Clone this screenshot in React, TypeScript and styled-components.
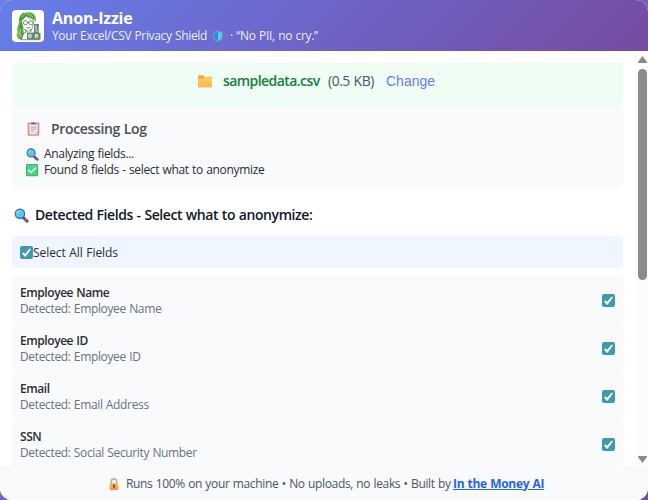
import React, { useState } from "react";
import styled, { createGlobalStyle } from "styled-components";

const GlobalStyle = createGlobalStyle`
  * { box-sizing: border-box; }
  body {
    margin: 0;
    height: 500px;
    overflow: hidden;
    background: linear-gradient(135deg, #667eea 0%, #764ba2 100%);
    font-family: "Open Sans", "Noto Sans", sans-serif;
    font-size: 12px;
    line-height: 16px;
    word-spacing: 0.5px;
    color: #2b2d33;
  }
`;

const Shell = styled.div`
  display: flex;
  flex-direction: column;
  height: 500px;
  overflow: hidden;
  border-radius: 12px;
  background: #fff;
  white-space: nowrap;
`;

const Header = styled.header`
  display: flex;
  align-items: center;
  gap: 8px;
  flex: none;
  height: 51px;
  padding: 1px 12px 0;
  background: linear-gradient(135deg, #667eea 0%, #764ba2 100%);
  color: #fff;
`;

const Logo = styled.div`
  display: flex;
  width: 32px;
  height: 32px;
  border-radius: 4px;
  background: #fff;
`;

const Brand = styled.h1`
  margin: 0;
  font-size: 16px;
  font-weight: 700;
  line-height: 18px;
  letter-spacing: -0.19px;
`;

const Tagline = styled.div`
  display: flex;
  align-items: center;
  height: 16px;
  margin-top: 1px;
  color: rgba(255, 255, 255, 0.9);
  letter-spacing: -0.34px;
`;

const Quote = styled.span`
  margin-left: 6px;
  letter-spacing: -0.3px;
`;

const Icon = styled.svg<{ $size: number; $before?: number; $after?: number; $lift?: number }>`
  flex: none;
  display: block;
  width: ${(p) => p.$size}px;
  height: ${(p) => p.$size}px;
  margin-left: ${(p) => p.$before ?? 0}px;
  margin-right: ${(p) => p.$after ?? 0}px;
  margin-bottom: ${(p) => p.$lift ?? 0}px;
`;

const Body = styled.div`
  display: flex;
  flex: none;
  height: 415px;
`;

const Content = styled.main`
  flex: 1;
  padding: 12px 12px 0;
  overflow: hidden;
`;

const FileBar = styled.div`
  display: flex;
  align-items: center;
  justify-content: flex-start;
  height: 43px;
  padding: 0 0 7px 186px;
  border-radius: 4px;
  background: #f0fdf4;
  font-size: 14px;
`;

const FileName = styled.span`
  width: 97px;
  margin-right: 8px;
  color: #15803d;
  font-weight: 600;
  letter-spacing: -0.57px;
`;

const FileSize = styled.span`
  width: 46px;
  margin-right: 12px;
  color: #4b5563;
  letter-spacing: -0.48px;
`;

const ChangeButton = styled.button`
  padding: 0;
  border: 0;
  background: none;
  color: #667eea;
  font: 14px/16px "Liberation Sans", Arial, sans-serif;
`;

const LogPanel = styled.section`
  height: 83px;
  padding: 14px 14px 0;
  border-radius: 6px;
  background: #f8fafc;
`;

const LogTitle = styled.h2`
  display: flex;
  align-items: center;
  height: 17px;
  margin: 0 0 9px;
  color: #495057;
  font-size: 14px;
  font-weight: 600;
  letter-spacing: -0.35px;
`;

const LogLine = styled.div`
  display: flex;
  align-items: center;
  height: 16px;
  letter-spacing: -0.33px;
`;

const SectionTitle = styled.h2`
  display: flex;
  align-items: center;
  height: 20px;
  margin: 16px 0 11px;
  padding-left: 2px;
  color: #111827;
  font-size: 14px;
  font-weight: 600;
  letter-spacing: -0.42px;
`;

const SelectAll = styled.div`
  display: flex;
  align-items: center;
  height: 32px;
  margin-bottom: 8px;
  padding: 0 8px;
  border-radius: 4px;
  background: #eff6ff;
  font-weight: 500;
  letter-spacing: -0.06px;
`;

const SelectAllLabel = styled.span`
  padding-top: 2px;
`;

const FieldRow = styled.div`
  display: flex;
  align-items: center;
  justify-content: space-between;
  height: 48px;
  padding: 0 8px;
  border-radius: 4px;
  background: #f8fafc;
`;

const FieldText = styled.div`
  padding-top: 2px;
`;

const FieldName = styled.div`
  font-weight: 600;
  letter-spacing: -0.43px;
`;

const FieldType = styled.div`
  color: #6b7280;
  letter-spacing: -0.35px;
`;

const Box = styled.button`
  flex: none;
  display: flex;
  width: 13px;
  height: 13px;
  padding: 0;
  border: 0;
  border-radius: 2px;
  background: #4299ab;
`;

const ScrollTrack = styled.div`
  display: flex;
  flex-direction: column;
  align-items: center;
  flex: none;
  width: 13px;
  padding: 5px 1px 3px 3px;
  background: #fcfcfc;
`;

const ScrollThumb = styled.div`
  width: 9px;
  height: 211px;
  margin: 6px 0 auto;
  border-radius: 5px;
  background: #8b8b8b;
`;

const Arrow = styled.svg`
  display: block;
  width: 9px;
  height: 7px;
`;

const Footer = styled.footer`
  display: flex;
  align-items: center;
  justify-content: flex-start;
  flex: 1;
  padding: 1px 0 0 108px;
  background: #f8fafc;
  color: #4b5563;
`;

const FooterText = styled.span`
  width: 327px;
  letter-spacing: -0.34px;
`;

const FooterLink = styled.a`
  color: #2563eb;
  font-weight: 700;
  letter-spacing: -0.3px;
  text-decoration: underline;
`;

type IconProps = { size: number; before?: number; after?: number; lift?: number };

const svgProps = ({ size, before, after, lift }: IconProps) => ({
  viewBox: "0 0 16 16",
  $size: size,
  $before: before,
  $after: after,
  $lift: lift,
});

const Search = (p: IconProps) => (
  <Icon {...svgProps(p)}>
    <path d="M9.3 9.8 14 14.1" stroke="#75468b" strokeWidth="3.2" strokeLinecap="round" />
    <path d="m11.7 11.3 2.2 2" stroke="#9b67a0" strokeWidth="1.2" strokeLinecap="round" />
    <circle cx="6.3" cy="6.1" r="5" fill="#55c6ee" stroke="#386c9c" strokeWidth="1.3" />
    <path d="M3.3 6a3.2 3.2 0 0 1 3-3" fill="none" stroke="#9be3f7" strokeWidth="1.2" />
  </Icon>
);

const Shield = (p: IconProps) => (
  <Icon {...svgProps(p)}>
    <path d="M8 0c2 1.500 4 2.100 6.500 2.200v5.700c0 3.900-2.500 6.400-6.500 8.100-4-1.700-6.500-4.200-6.500-8.100V2.200C4 2.100 6 1.500 8 0Z" fill="#7f93b4" />
    <path d="M8 1.600v12.700c-3.300-1.500-5.100-3.500-5.100-6.400V3.500C5 3.300 6.500 2.700 8 1.600Z" fill="#1694f0" />
    <path d="M8 1.600v12.700c3.300-1.500 5.100-3.500 5.100-6.400V3.500C11 3.300 9.500 2.700 8 1.600Z" fill="#5cc5ff" />
  </Icon>
);

const Folder = (p: IconProps) => (
  <Icon {...svgProps(p)}>
    <defs>
      <linearGradient id="folder" x1="0" y1="0" x2="0" y2="1">
        <stop offset="0" stopColor="#ffd057" />
        <stop offset="1" stopColor="#ffb45d" />
      </linearGradient>
    </defs>
    <path d="M0 2.500Q0 1.500 1 1.500h4.500L7.300 3H15q1 0 1 1v9H0Z" fill="#f3a536" />
    <path d="M0 5h6l1.500-1.300H15q1 0 1 1v9.800q0 1-1 1H1q-1 0-1-1Z" fill="url(#folder)" />
  </Icon>
);

const Clipboard = (p: IconProps) => (
  <Icon {...svgProps(p)}>
    <rect x="1.800" y="1.500" width="12.400" height="14.300" rx="1" fill="#dc946c" />
    <path d="M3.500 3h9v11.200h-9Z" fill="#f1e8fa" />
    <path d="m9 14.200 3.500-3.500v3.500Z" fill="#c5b2d8" />
    <path d="M5 3.800V2h1.700a1.400 1.400 0 0 1 2.600 0H11v1.800Z" fill="#77678a" />
    <path d="M5 6.500h6M5 8.700h6M5 11h3.700" stroke="#a99abb" strokeWidth="1" />
  </Icon>
);

const Done = (p: IconProps) => (
  <Icon {...svgProps(p)}>
    <rect x="0" y="0" width="15" height="15" rx="1.200" fill="#36bc70" />
    <rect x="1.200" y="1.200" width="12.600" height="12.400" rx="1" fill="#4bd487" />
    <path d="m3.400 7.600 2.900 2.900L11.800 4.800" fill="none" stroke="#fff" strokeWidth="1.700" strokeLinecap="round" />
  </Icon>
);

const Lock = (p: IconProps) => (
  <Icon {...svgProps(p)}>
    <defs>
      <linearGradient id="lock" x1="0" y1="0" x2="0" y2="1">
        <stop offset="0" stopColor="#ffcb4c" />
        <stop offset="1" stopColor="#f58a50" />
      </linearGradient>
    </defs>
    <path d="M4.500 8V4.600a3.500 3.500 0 0 1 7 0V8" fill="none" stroke="#a9a5b4" strokeWidth="1.900" />
    <rect x="2.200" y="6.500" width="11.600" height="9.500" rx="1.400" fill="url(#lock)" />
    <circle cx="8" cy="10" r="1.500" fill="#50435d" />
    <path d="M8 10.500v3" stroke="#50435d" strokeWidth="1.300" />
  </Icon>
);

const Portrait = () => (
  <svg width="32" height="32" viewBox="0 0 32 32">
    <path d="M7 13C6 5.500 11 2 16.500 2.200 22 2.300 25 6 23.700 12L21.500 8.500 15 6.500 11.500 10l-.5 8 1 5-2 6H6.500C4.600 26.800 4 24.500 5.700 22L5 18.300Z" fill="#6db347" />
    <path d="M14 6 9.500 11 11 18l4 4 5-3 2-8-3-4Z" fill="#fbfffa" stroke="#397846" strokeWidth=".6" />
    <path d="M8 10c2-1 5-3 6-5 2 3 5 3 8 4M8 13c2 4-2 5 0 8M9 15c2 3 0 6 1 9M7 24l3 3M12 3c-3 1-4 4-4 6M17 3c2 0 4 2 5 5" fill="none" stroke="#327c37" strokeWidth=".8" />
    <path d="m6 18 3 3-2 3 3 3M16 3c2 1 4 2 5 4" fill="none" stroke="#a1d765" strokeWidth="1" />
    <circle cx="13.500" cy="12.800" r="2.100" fill="none" stroke="#47735d" strokeWidth=".8" />
    <circle cx="19" cy="12.800" r="2.100" fill="none" stroke="#47735d" strokeWidth=".8" />
    <path d="M15.500 12.500h1.500M14.500 17.500q2 1.300 3.500-.2M14 19v3l-3 2-2 6M19 19v3" fill="none" stroke="#3e775a" strokeWidth=".8" />
    <path d="M22 14h5v9h1.500v6.500H15v-7h7Z" fill="#628c6d" />
    <path d="M24 15.200v5M26 18h1M23.500 21h3M17 27.500l2-3M25 24.500l-2 3" fill="none" stroke="#d5e7d1" strokeWidth="1" />
    <circle cx="18" cy="26" r="1.900" fill="#e9f2e4" />
    <circle cx="24.500" cy="26" r="1.900" fill="#e9f2e4" />
    <path d="m17.300 26 .8.700 1-1.300m4.800.6.800.700 1-1.300" fill="none" stroke="#395f4f" strokeWidth=".7" />
    <path d="M8 29.700h20" stroke="#477951" strokeWidth=".7" />
  </svg>
);

function Checkbox({ label }: { label: string }) {
  const [checked, setChecked] = useState(true);
  return (
    <Box role="checkbox" aria-label={label} aria-checked={checked} onClick={() => setChecked(!checked)}>
      <svg width="13" height="13" viewBox="0 0 13 13">
        {checked && <path d="m2.800 7 2.400 2.500 5-6.500" fill="none" stroke="#fff" strokeWidth="2" />}
      </svg>
    </Box>
  );
}

const fields = [
  ["Employee Name", "Employee Name"],
  ["Employee ID", "Employee ID"],
  ["Email", "Email Address"],
  ["SSN", "Social Security Number"],
];

export default function App() {
  return (
    <>
      <GlobalStyle />
      <Shell>
        <Header>
          <Logo><Portrait /></Logo>
          <div>
            <Brand>Anon-Izzie</Brand>
            <Tagline>
              <span>Your Excel/CSV Privacy Shield</span>
              <Shield size={12} before={5} />
              <Quote>· “No PII, no cry.”</Quote>
            </Tagline>
          </div>
        </Header>
        <Body>
          <Content>
            <FileBar>
              <Folder size={14} after={11} />
              <FileName>sampledata.csv</FileName>
              <FileSize>(0.5 KB)</FileSize>
              <ChangeButton>Change</ChangeButton>
            </FileBar>
            <LogPanel>
              <LogTitle><Clipboard size={15} after={10} />Processing Log</LogTitle>
              <LogLine><Search size={13} after={5} />Analyzing fields...</LogLine>
              <LogLine><Done size={13} after={5} />Found 8 fields - select what to anonymize</LogLine>
            </LogPanel>
            <SectionTitle><Search size={15} after={6} />Detected Fields - Select what to anonymize:</SectionTitle>
            <SelectAll>
              <Checkbox label="Select all fields" />
              <SelectAllLabel>Select All Fields</SelectAllLabel>
            </SelectAll>
            {fields.map(([name, type]) => (
              <FieldRow key={name}>
                <FieldText>
                  <FieldName>{name}</FieldName>
                  <FieldType>Detected: {type}</FieldType>
                </FieldText>
                <Checkbox label={name} />
              </FieldRow>
            ))}
          </Content>
          <ScrollTrack>
            <Arrow viewBox="0 0 9 7"><path d="M4.500 0 9 6v1H0V6Z" fill="#8b8b8b" /></Arrow>
            <ScrollThumb />
            <Arrow viewBox="0 0 9 7"><path d="M0 0h9v1L4.500 7 0 1Z" fill="#8b8b8b" /></Arrow>
          </ScrollTrack>
        </Body>
        <Footer>
          <Lock size={12} after={6} />
          <FooterText>Runs 100% on your machine • No uploads, no leaks • Built by</FooterText>
          <FooterLink>In the Money AI</FooterLink>
        </Footer>
      </Shell>
    </>
  );
}
